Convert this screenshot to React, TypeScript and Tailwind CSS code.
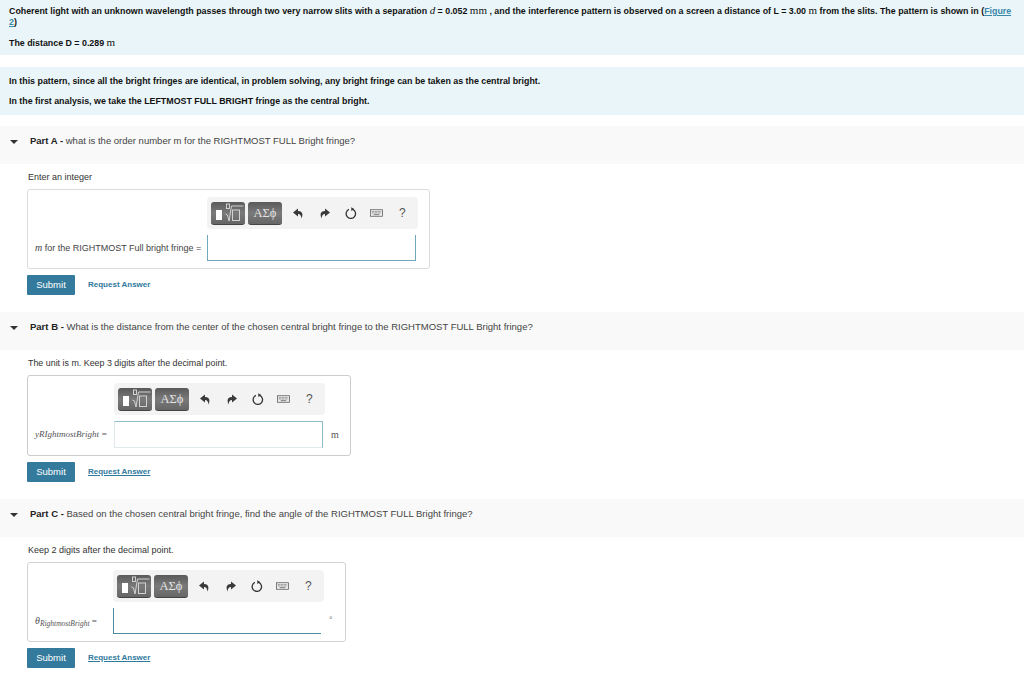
import React from "react";

const sans = "font-['Liberation_Sans',Arial,sans-serif]";
const serif = "font-['Liberation_Serif','Times_New_Roman',serif]";

const btn =
  "w-[34px] h-[23px] rounded-[3px] bg-gradient-to-b from-[#5a5a5a] via-[#7a7a7a] to-[#666666] border-b border-[#444444]";

// Templates / symbols buttons + undo, redo, reset, keyboard, help
const Toolbar = () => (
  <div className="w-[211px] h-[32px] bg-[#f3f3f3] rounded-[4px] flex items-center pl-[4px]">
    <button className={`${btn} relative`}>
      <span className="absolute left-[5px] top-[8px] w-[6px] h-[10px] bg-white" />
      <svg viewBox="0 0 20 20" className="absolute left-[14px] top-[1px] w-[20px] h-[20px]" fill="none" stroke="#dddddd" strokeWidth="0.9">
        <rect x="1.5" y="1" width="3" height="4.5" />
        <path d="M0.5 11l2 1 1.5 6 2.5-15h12" />
        <rect x="7.5" y="7" width="7" height="10.5" />
      </svg>
    </button>
    <button className={`${btn} ml-[3px] text-[#e4e4e4] text-[12.5px] leading-[22px] ${serif}`}>ΑΣϕ</button>
    <svg viewBox="0 0 10 11" className="ml-[11px] w-[10px] h-[11px]">
      <path d="M5 0.5L0 4.5l5 4V6c2.3 0 3.2 1.6 3.4 4.5C10.4 6.5 9.6 3 5 3z" fill="#3a3a3a" />
    </svg>
    <svg viewBox="0 0 10 11" className="ml-[17px] w-[10px] h-[11px]">
      <path d="M5 0.5L10 4.5l-5 4V6C2.7 6 1.8 7.6 1.6 10.5-.4 6.5.4 3 5 3z" fill="#3a3a3a" />
    </svg>
    <svg viewBox="0 0 12 12" className="ml-[15px] w-[12px] h-[12px]" fill="none" stroke="#333333" strokeWidth="1.3">
      <path d="M7.8 2.4A4.7 4.7 0 1 1 3.9 2.4" />
      <path d="M6.2 0.2l3 1.9-2.8 2z" fill="#333333" stroke="none" />
    </svg>
    <svg viewBox="0 0 14 8" className="ml-[13px] w-[13px] h-[8px]" fill="none" stroke="#555555" strokeWidth="0.8">
      <rect x="0.5" y="0.5" width="13" height="7" fill="#eeeeee" />
      <path d="M2 2.5h10M2 4h10" strokeDasharray="1 0.6" />
      <path d="M4 5.8h6" />
    </svg>
    <span className={`ml-[16px] text-[12px] text-[#555555] ${sans}`}>?</span>
  </div>
);

const Actions = ({ underline }: { underline?: boolean }) => (
  <div className="flex items-center">
    <button className={`w-[48px] h-[20px] bg-[#337a9c] text-white text-[9.5px] rounded-[1px] ${sans}`}>Submit</button>
    <a href="#" className={`ml-[13px] text-[8px] font-bold text-[#2f7a9d] ${underline ? "underline" : ""}`}>
      Request Answer
    </a>
  </div>
);

const PartHeader = ({ part, text }: { part: string; text: string }) => (
  <div className="h-[38px] bg-[#f9f9f9] flex items-start pt-[9px] pl-[10px] text-[9.5px] leading-[12px] text-[#444444]">
    <svg viewBox="0 0 8 4" className="w-[8px] h-[4px] mt-[5px] mr-[12px]">
      <path d="M0 0h8L4 4z" fill="#333333" />
    </svg>
    <p>
      <b className="text-[#222222]">Part {part} -</b> {text}
    </p>
  </div>
);

const Unit = ({ children }: { children: React.ReactNode }) => (
  <span className={`font-normal text-[11px] leading-none ${serif}`}>{children}</span>
);

export default function App() {
  return (
    <div className={`w-[1024px] h-[678px] bg-white overflow-hidden text-[#111111] ${sans}`}>
      <div className="h-[55px] bg-[#e9f5f8] pt-[5px] pl-[9px] pr-[9px] text-[8.85px] leading-[11px] font-bold">
        <p>
          Coherent light with an unknown wavelength passes through two very narrow slits with a separation{" "}
          <i className={`font-normal text-[11px] leading-none ${serif}`}>d</i> = 0.052 <Unit>mm</Unit> , and the interference pattern is observed on a screen a distance of L = 3.00{" "}
          <Unit>m</Unit> from the slits. The pattern is shown in (
          <a href="#" className="text-[#3b87a8] underline">Figure 2</a>)
        </p>
        <p className="mt-[9px]">
          The distance D = 0.289 <Unit>m</Unit>
        </p>
      </div>

      <div className="mt-[12px] h-[48px] bg-[#e9f5f8] pt-[9px] pl-[9px] text-[8.85px] leading-[11px] font-bold">
        <p>In this pattern, since all the bright fringes are identical, in problem solving, any bright fringe can be taken as the central bright.</p>
        <p className="mt-[9px]">In the first analysis, we take the LEFTMOST FULL BRIGHT fringe as the central bright.</p>
      </div>

      <div className="mt-[11px]">
        <PartHeader part="A" text="what is the order number m for the RIGHTMOST FULL Bright fringe?" />
        <div className="pl-[27px] text-[9px] text-[#333333]">
          <p className="pt-[7px] pl-[1px] leading-[12px]">Enter an integer</p>
          <div className="mt-[6px] w-[403px] h-[80px] border border-[#dcdcdc] rounded-[3px] pl-[179px] pt-[7px]">
            <Toolbar />
            <div className="flex items-center mt-[6px] -ml-[172px]">
              <span className="w-[172px] whitespace-nowrap text-[#444444]">
                <i className={`text-[10px] ${serif}`}>m</i> for the RIGHTMOST Full bright fringe =
              </span>
              <div className="w-[209px] h-[26px] border border-t-0 border-[#6fa8bc] bg-white" />
            </div>
          </div>
          <div className="mt-[6px]"><Actions /></div>
        </div>
      </div>

      <div className="mt-[17px]">
        <PartHeader part="B" text="What is the distance from the center of the chosen central bright fringe to the RIGHTMOST FULL Bright fringe?" />
        <div className="pl-[27px] text-[9px] text-[#333333]">
          <p className="pt-[7px] pl-[1px] leading-[12px] text-[8.9px]">The unit is m. Keep 3 digits after the decimal point.</p>
          <div className="mt-[6px] w-[324px] h-[81px] border border-[#cccccc] rounded-[3px] pl-[86px] pt-[7px]">
            <Toolbar />
            <div className="flex items-center mt-[6px] -ml-[79px]">
              <span className={`w-[79px] whitespace-nowrap italic text-[9px] text-[#555555] ${serif}`}>yRIghtmostBright =</span>
              <div className="w-[209px] h-[27px] border border-[#8fbccb] border-b-[#dfe9ec] border-l-[#dfe9ec] bg-white" />
              <span className={`ml-[8px] text-[10px] text-[#555555] ${serif}`}>m</span>
            </div>
          </div>
          <div className="mt-[6px]"><Actions underline /></div>
        </div>
      </div>

      <div className="mt-[17px]">
        <PartHeader part="C" text="Based on the chosen central bright fringe, find the angle of the RIGHTMOST FULL Bright fringe?" />
        <div className="pl-[27px] text-[9px] text-[#333333]">
          <p className="pt-[7px] pl-[1px] leading-[12px]">Keep 2 digits after the decimal point.</p>
          <div className="mt-[6px] w-[319px] h-[80px] border border-[#d2d2d2] rounded-[3px] pl-[85px] pt-[7px]">
            <Toolbar />
            <div className="flex items-start mt-[6px] -ml-[78px]">
              <span className={`w-[78px] mt-[5px] whitespace-nowrap text-[#555555] ${serif}`}>
                <i className="text-[10px]">θ</i>
                <span className="italic text-[7.5px] relative top-[2px]">RightmostBright</span> =
              </span>
              <div className="w-[208px] h-[26px] border-l border-b border-[#4f8aa3] bg-white" />
              <span className="ml-[8px] mt-[6px] text-[9px] text-[#777777]">°</span>
            </div>
          </div>
          <div className="mt-[6px]"><Actions underline /></div>
        </div>
      </div>
    </div>
  );
}
